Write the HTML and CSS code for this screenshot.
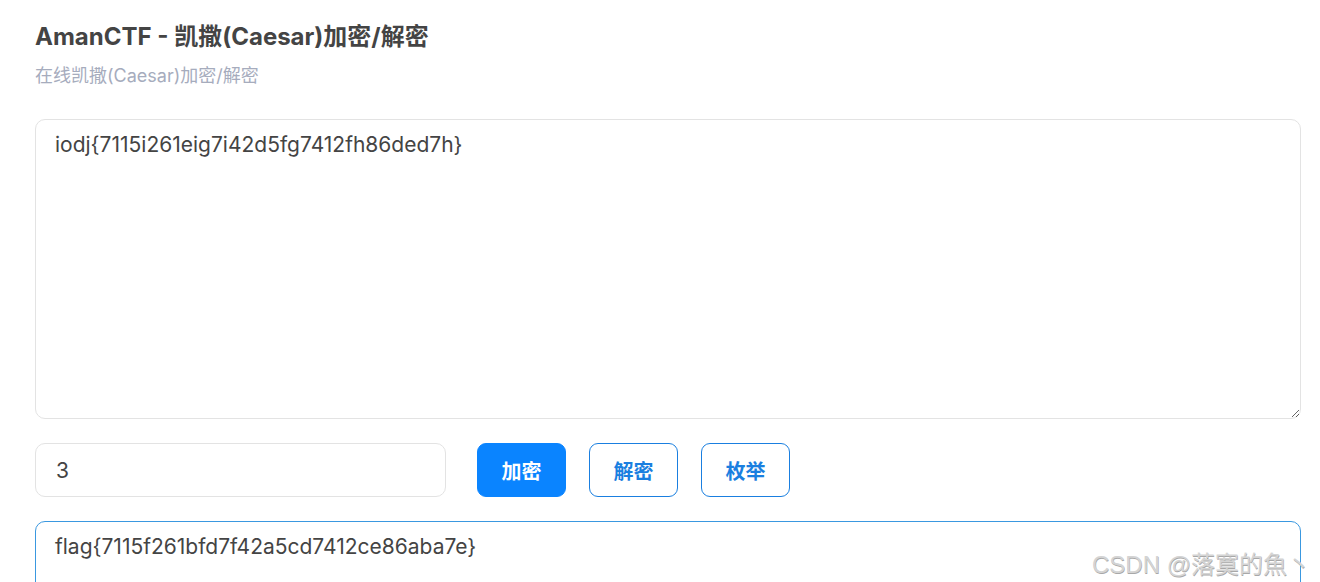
FILE: index.html
```html
<!DOCTYPE html>
<html lang="zh">
<head>
<meta charset="utf-8">
<link rel="stylesheet" href="styles.css">
</head>
<body>
<div class="page">
  <h1 class="title">AmanCTF - 凯撒(Caesar)加密/解密</h1>
  <p class="subtitle">在线凯撒(Caesar)加密/解密</p>
  <textarea class="box input-box">iodj{7115i261eig7i42d5fg7412fh86ded7h}</textarea>
  <div class="controls">
    <input class="shift" type="text" value="3">
    <div class="buttons">
      <button class="btn primary">加密</button>
      <button class="btn outline">解密</button>
      <button class="btn outline">枚举</button>
    </div>
  </div>
  <div class="box output-box">flag{7115f261bfd7f42a5cd7412ce86aba7e}</div>
  <div class="watermark">CSDN @落寞的魚丶</div>
</div>
</body>
</html>
```

FILE: styles.css
```css
html, body {
  margin: 0;
  padding: 0;
  background: #ffffff;
}
body {
  font-family: Inter, "Noto Sans CJK SC", sans-serif;
  color: #444;
}
.page {
  box-sizing: border-box;
  height: 582px;
  overflow: hidden;
  position: relative;
  padding: 21px 19px 0 35px;
  display: flex;
  flex-direction: column;
}
.title {
  margin: 0;
  font-size: 24px;
  line-height: 32px;
  font-weight: 700;
  color: #444;
}
.subtitle {
  margin: 11px 0 0 0;
  font-size: 18px;
  line-height: 24px;
  color: #a6acbd;
}
.box {
  box-sizing: border-box;
  width: 100%;
  flex: none;
  border: 1px solid #e3e3e3;
  border-radius: 10px;
  padding: 11px 19px;
  font-family: Inter, "Noto Sans CJK SC", sans-serif;
  font-size: 21px;
  line-height: 28px;
  color: #444;
  background: #fff;
}
.input-box {
  margin-top: 31px;
  height: 300px;
  resize: vertical;
  display: block;
  outline: none;
}
.controls {
  display: flex;
  align-items: center;
  margin-top: 24px;
  gap: 31px;
  flex: none;
}
.shift {
  box-sizing: border-box;
  width: 411px;
  height: 54px;
  border: 1px solid #e3e3e3;
  border-radius: 10px;
  padding: 0 20px;
  font-family: Inter, sans-serif;
  font-size: 21px;
  color: #444;
  outline: none;
}
.buttons {
  display: flex;
  gap: 23px;
}
.btn {
  box-sizing: border-box;
  width: 89px;
  height: 54px;
  border-radius: 9px;
  font-family: "Noto Sans CJK SC", sans-serif;
  font-size: 20px;
  font-weight: 700;
  cursor: pointer;
  padding: 0;
}
.primary {
  background: #0a84ff;
  border: 1px solid #0a84ff;
  color: #fff;
}
.outline {
  background: #fff;
  border: 1px solid #1a7fe0;
  color: #1a7fe0;
}
.output-box {
  margin-top: 24px;
  height: 120px;
  border-color: #3a98e0;
}
.watermark {
  position: absolute;
  left: 1092px;
  top: 545px;
  font-family: "Liberation Sans", "Noto Sans CJK SC", sans-serif;
  font-size: 24px;
  color: #d4d4d4;
  text-shadow: 0.5px 0.5px 0.5px #a8a8a8;
  white-space: nowrap;
}
```
